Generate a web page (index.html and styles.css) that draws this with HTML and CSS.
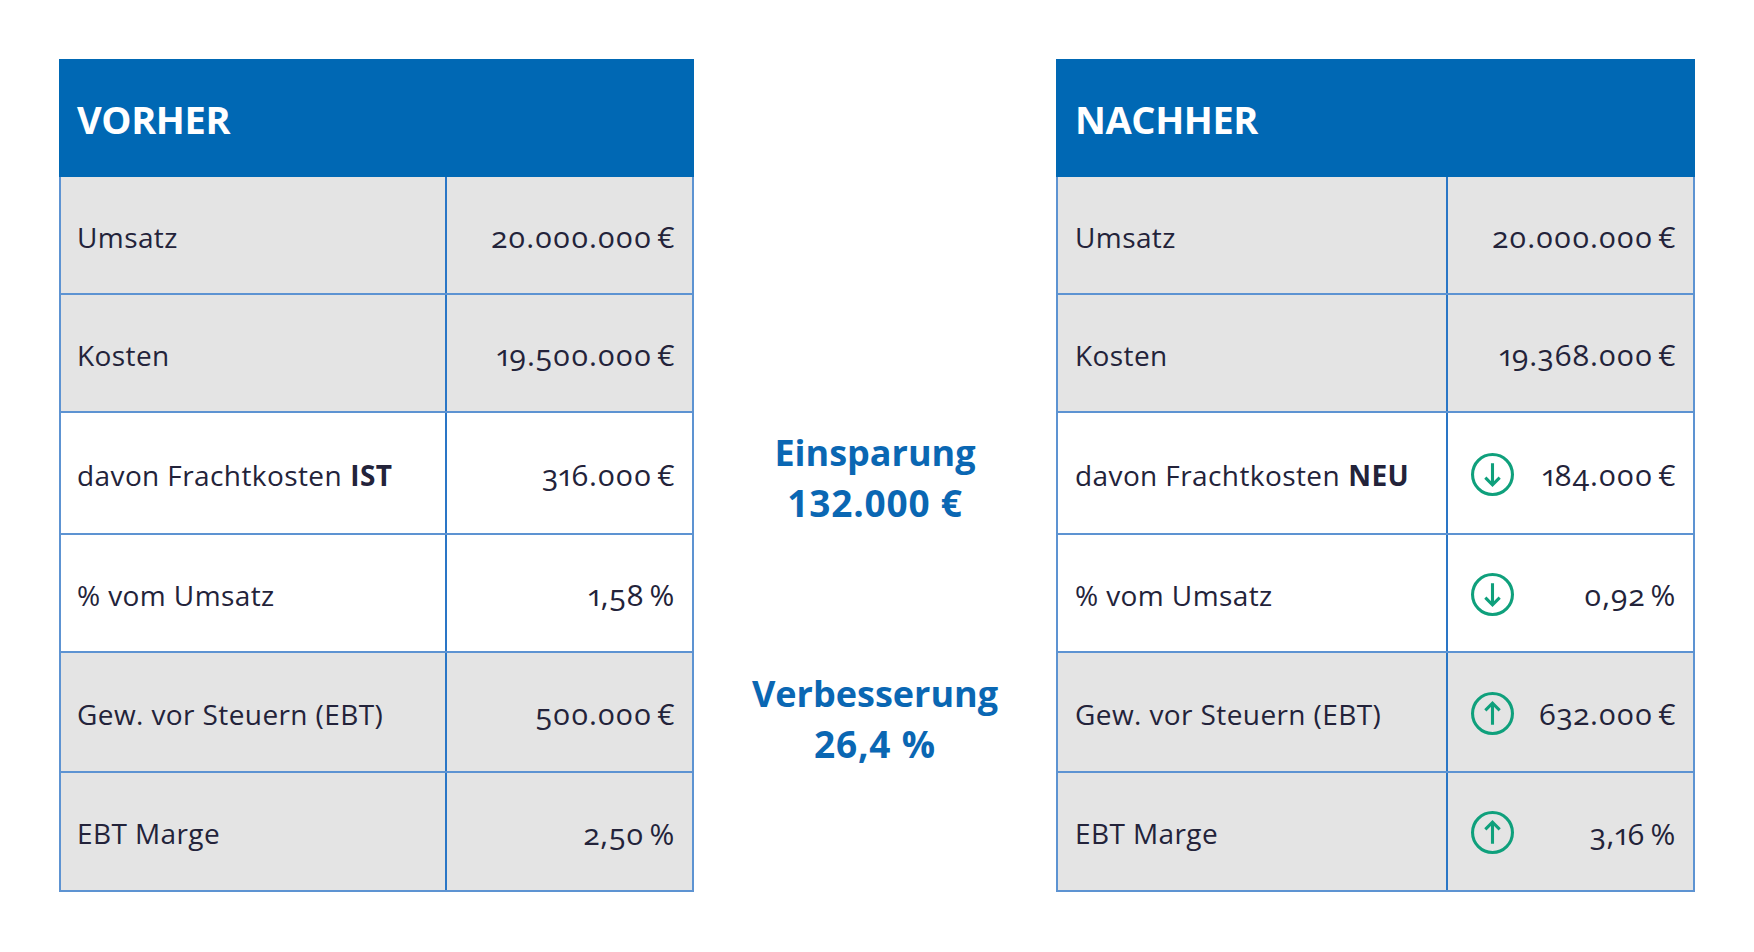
FILE: index.html
```html
<!DOCTYPE html>
<html lang="de">
<head>
<meta charset="utf-8">
<title>Vorher / Nachher</title>
<link rel="stylesheet" href="styles.css">
</head>
<body>
<div class="page">
  <div class="table table-left">
    <div class="head">VORHER</div>
    <div class="row grey r1"><div class="label">Umsatz</div><div class="value"><span class="num">20.000.000 €</span></div></div>
    <div class="row grey r2"><div class="label">Kosten</div><div class="value"><span class="num">19.500.000 €</span></div></div>
    <div class="row r3"><div class="label">davon Frachtkosten <b>IST</b></div><div class="value"><span class="num">316.000 €</span></div></div>
    <div class="row r4"><div class="label">% vom Umsatz</div><div class="value"><span class="num">1,58 %</span></div></div>
    <div class="row grey r5"><div class="label">Gew. vor Steuern (EBT)</div><div class="value"><span class="num">500.000 €</span></div></div>
    <div class="row grey r6"><div class="label">EBT Marge</div><div class="value"><span class="num">2,50 %</span></div></div>
  </div>

  <div class="middle">
    <div class="claim"><span class="word">Einsparung</span><br><span class="fig">132.000 €</span></div>
    <div class="claim"><span class="word">Verbesserung</span><br><span class="fig">26,4 %</span></div>
  </div>

  <div class="table table-right">
    <div class="head">NACHHER</div>
    <div class="row grey r1"><div class="label">Umsatz</div><div class="value"><span class="num">20.000.000 €</span></div></div>
    <div class="row grey r2"><div class="label">Kosten</div><div class="value"><span class="num">19.368.000 €</span></div></div>
    <div class="row r3"><div class="label">davon Frachtkosten <b>NEU</b></div><div class="value">
      <svg class="icon" viewBox="0 0 42 42"><circle cx="21" cy="21" r="19.5"/><path d="M21 10V31M14 24L21 31L28 24"/></svg>
      <span class="num">184.000 €</span></div></div>
    <div class="row r4"><div class="label">% vom Umsatz</div><div class="value">
      <svg class="icon" viewBox="0 0 42 42"><circle cx="21" cy="21" r="19.5"/><path d="M21 10V31M14 24L21 31L28 24"/></svg>
      <span class="num">0,92 %</span></div></div>
    <div class="row grey r5"><div class="label">Gew. vor Steuern (EBT)</div><div class="value">
      <svg class="icon" viewBox="0 0 42 42"><circle cx="21" cy="21" r="19.5"/><path d="M21 32V11M14 18L21 11L28 18"/></svg>
      <span class="num">632.000 €</span></div></div>
    <div class="row grey r6"><div class="label">EBT Marge</div><div class="value">
      <svg class="icon" viewBox="0 0 42 42"><circle cx="21" cy="21" r="19.5"/><path d="M21 32V11M14 18L21 11L28 18"/></svg>
      <span class="num">3,16 %</span></div></div>
  </div>
</div>
</body>
</html>
```

FILE: styles.css
```css
* { box-sizing: border-box; }

html, body {
  margin: 0;
  padding: 0;
  background: #ffffff;
}

body {
  font-family: "Open Sans", "Noto Sans", "Liberation Sans", sans-serif;
  color: #23233a;
  width: 1754px;
  height: 952px;
  overflow: hidden;
}

.page {
  display: flex;
  padding: 59px 0 0 59px;
}

.table {
  display: flex;
  flex-direction: column;
  border-left: 2px solid #5d93d2;
  border-right: 2px solid #5d93d2;
}

.table-left { width: 635px; }
.table-right { width: 639px; }

.head {
  height: 118px;
  margin: 0 -2px;
  background: #0068b4;
  color: #ffffff;
  font-weight: 700;
  font-size: 38px;
  letter-spacing: -0.4px;
  display: flex;
  align-items: center;
  padding: 2px 0 0 18px;
}

.table-right .head { padding-left: 19px; }

.row {
  display: flex;
  border-bottom: 2px solid #5d93d2;
  background: #ffffff;
  font-size: 28px;
  letter-spacing: 0.4px;
}

.row.grey { background: #e4e4e4; }

.r1 { height: 118px; }
.r2 { height: 118px; }
.r3 { height: 122px; }
.r4 { height: 118px; }
.r5 { height: 120px; }
.r6 { height: 119px; }

.label {
  width: 386px;
  border-right: 2px solid #2a76c6;
  display: flex;
  align-items: center;
  padding-left: 16px;
  padding-top: 3px;
}

.table-right .label {
  width: 390px;
  padding-left: 17px;
}

.label b { font-weight: 700; margin-left: 0.3em; }

.value {
  flex: 1;
  display: flex;
  align-items: center;
  justify-content: flex-end;
  padding-right: 17px;
  padding-top: 3px;
}

.num {
  font-size: 30px;
  letter-spacing: 0.6px;
  word-spacing: -3px;
  font-variant-numeric: oldstyle-nums proportional-nums;
  font-feature-settings: "onum" 1, "pnum" 1;
  white-space: nowrap;
}

.icon {
  width: 43px;
  height: 43px;
  margin-left: 23px;
  margin-right: auto;
  margin-top: -1px;
  fill: none;
  stroke: #0fa07c;
  stroke-width: 3;
}

.middle {
  width: 362px;
  display: flex;
  flex-direction: column;
  align-items: center;
  padding-top: 369px;
  gap: 140px;
}

.claim {
  color: #0a67b3;
  font-weight: 700;
  font-size: 36px;
  line-height: 50px;
  text-align: center;
  white-space: nowrap;
}

.claim .word { letter-spacing: 0; }
.claim .fig { font-size: 37px; letter-spacing: 0.8px; }
```
